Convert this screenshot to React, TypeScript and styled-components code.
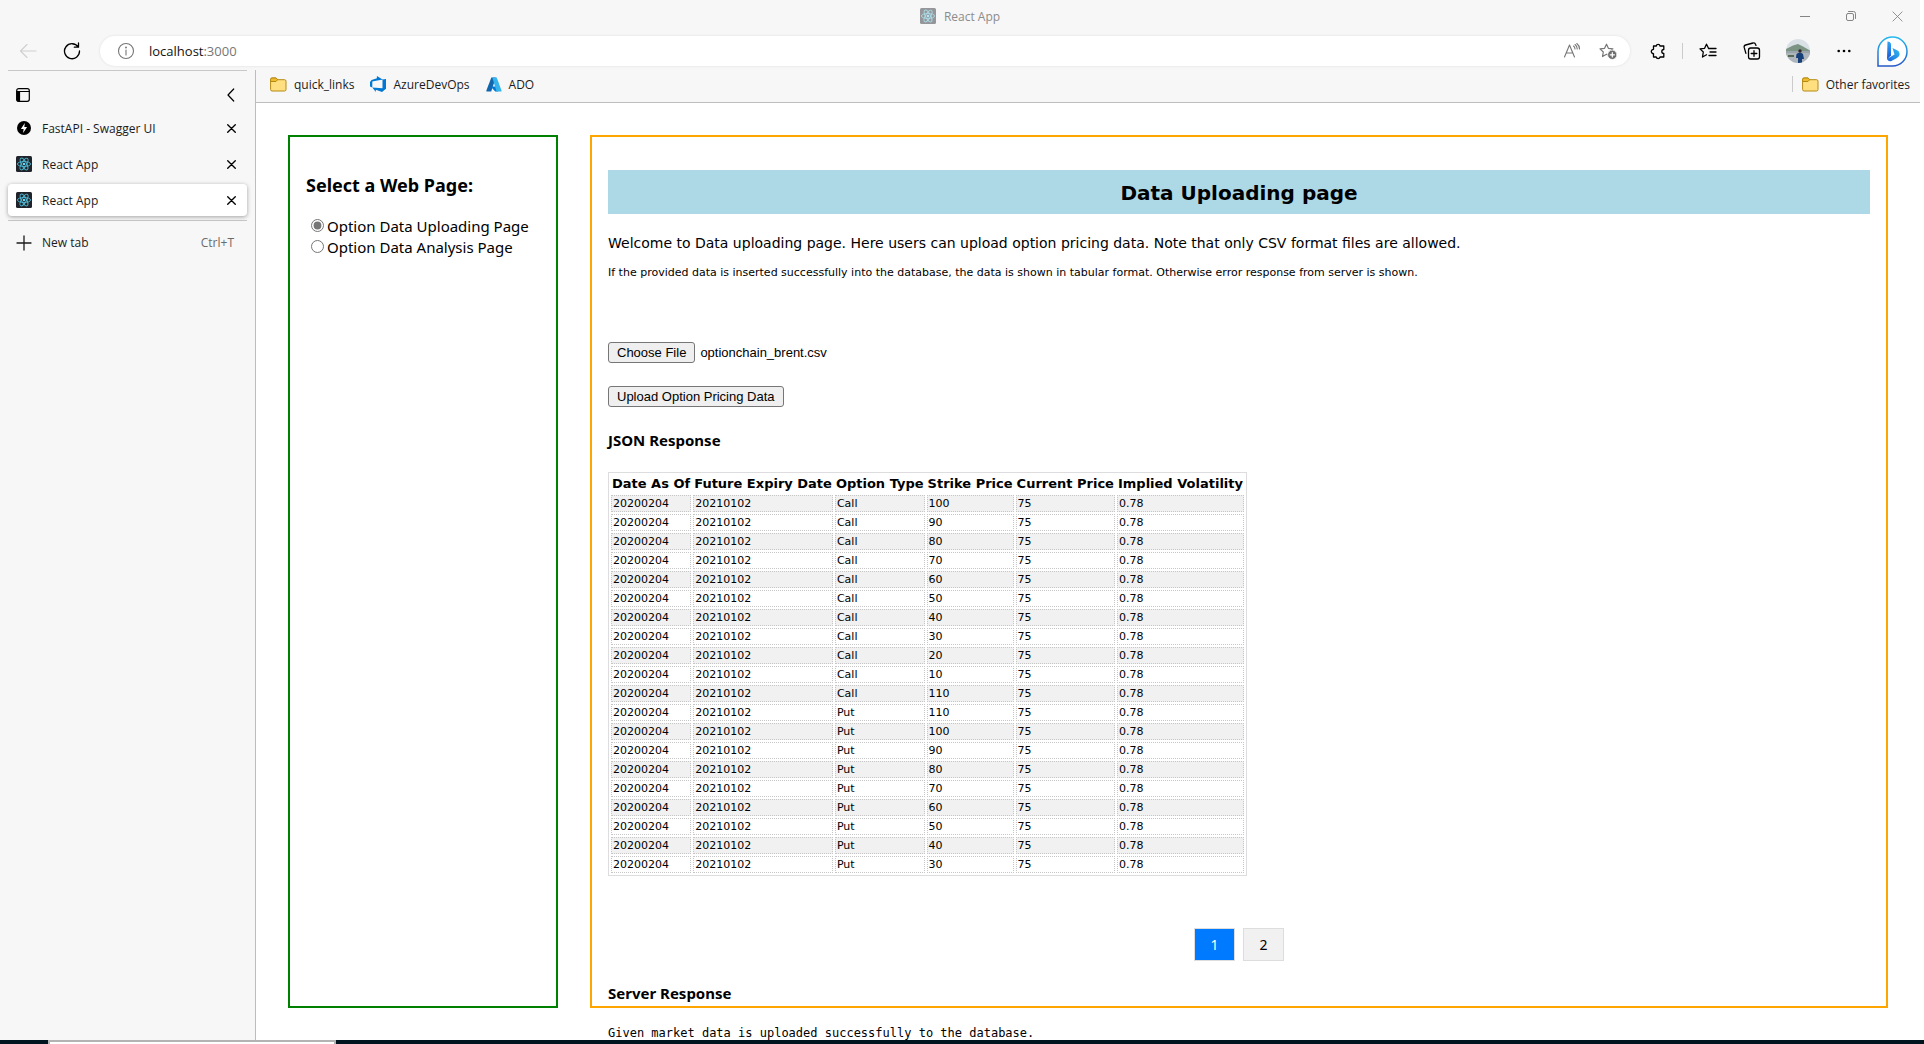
import React, { useState } from "react";
import styled, { createGlobalStyle, css } from "styled-components";

const uiFont = `"Open Sans", "Noto Sans", sans-serif`;
const headingFont = `"Noto Sans", "Open Sans", sans-serif`;
const pageFont = `"DejaVu Sans", sans-serif`;

const Global = createGlobalStyle`
  * { box-sizing: border-box; }
  body { margin: 0; background: #fff; color: #000; }
`;

const Desktop = styled.div`
  display: flex;
  flex-direction: column;
  height: 100vh;
  overflow: hidden;
  background: #fff;
`;

const BrowserWindow = styled.div`
  flex: 1;
  min-height: 0;
  display: flex;
  flex-direction: column;
  margin-right: 4px;
  background: #f7f7f7;
  font-family: ${uiFont};
  font-size: 12px;
`;

const TitleBar = styled.header`
  display: grid;
  grid-template-columns: 1fr auto 1fr;
  align-items: center;
  height: 32px;
`;

const WindowTitle = styled.div`
  display: flex;
  align-items: center;
  gap: 8px;
  color: #8c8c8c;
  svg { opacity: 0.45; }
`;

const WindowButtons = styled.div`
  display: flex;
  justify-content: flex-end;
  color: #858585;
`;

const PlainButton = styled.button<{ $w?: number }>`
  display: flex;
  align-items: center;
  justify-content: center;
  flex: none;
  width: ${(p) => p.$w ?? 24}px;
  height: 32px;
  padding: 0;
  border: 0;
  background: none;
  color: inherit;
  &:disabled { color: #cfcfcf; }
`;

const Toolbar = styled.div`
  display: flex;
  align-items: center;
  height: 38px;
  padding: 0 2px 0 6px;
`;

const NavButtons = styled.div`
  display: flex;
  padding-right: 6px;
`;

const AddressBar = styled.form`
  flex: 1;
  display: flex;
  align-items: center;
  height: 30px;
  padding: 0 4px 0 17px;
  border-radius: 15px;
  background: #fff;
  box-shadow: 0 0 3px rgba(0, 0, 0, 0.1);
  color: #767676;
`;

const AddressField = styled.label`
  position: relative;
  flex: 1;
  margin-left: 14px;
  font-size: 13px;
  line-height: 20px;
`;

const AddressInput = styled.input`
  width: 100%;
  padding: 0;
  border: 0;
  outline: 0;
  background: none;
  color: #767676;
  font: inherit;
`;

const AddressHost = styled.span`
  position: absolute;
  left: 0;
  top: 0;
  background: #fff;
  color: #111;
  pointer-events: none;
`;

const ToolIcons = styled.div`
  display: flex;
  align-items: center;
`;

const Divider = styled.span<{ $m: string }>`
  width: 1px;
  height: 16px;
  margin: ${(p) => p.$m};
  background: #cbcbcb;
`;

const Body = styled.div`
  flex: 1;
  min-height: 0;
  display: grid;
  grid-template-columns: 256px minmax(0, 1fr);
`;

const Sidebar = styled.nav`
  padding: 0 8px;
  border-right: 1px solid #bdbdbd;
`;

const SidebarHead = styled.div`
  display: flex;
  align-items: center;
  justify-content: space-between;
  height: 42px;
  padding: 6px 4px 0 6px;
  border-top: 1px solid #c8c8c8;
`;

const TabList = styled.ul`
  margin: 0;
  padding: 0 0 4px;
  list-style: none;
  border-bottom: 1px solid #c8c8c8;
`;

const Tab = styled.li<{ $active?: boolean }>`
  display: flex;
  align-items: center;
  height: 32px;
  margin-bottom: 4px;
  padding: 0 4px 0 8px;
  border-radius: 4px;
  &:last-child { margin-bottom: 0; }
  ${(p) => p.$active && css`
    background: #fff;
    box-shadow: 0 1px 4px rgba(0, 0, 0, 0.35);
  `}
`;

const TabTitle = styled.a`
  flex: 1;
  display: flex;
  align-items: center;
  gap: 10px;
  color: #1b1b1b;
  text-decoration: none;
`;

const NewTab = styled.button`
  display: flex;
  align-items: center;
  width: 100%;
  height: 43px;
  padding: 0 13px 0 8px;
  border: 0;
  background: none;
  color: #1b1b1b;
  font: inherit;
`;

const NewTabLabel = styled.span`
  flex: 1;
  margin-left: 10px;
  text-align: left;
`;

const Shortcut = styled.span`
  color: #6b6b6b;
`;

const ContentColumn = styled.div`
  display: flex;
  flex-direction: column;
  min-width: 0;
  min-height: 0;
`;

const FavoritesBar = styled.div`
  display: flex;
  align-items: center;
  gap: 16px;
  height: 33px;
  padding: 0 10px 4px 14px;
  border-bottom: 1px solid #bdbdbd;
`;

const Favorite = styled.a`
  display: flex;
  align-items: center;
  gap: 7px;
  color: #1b1b1b;
  text-decoration: none;
`;

const OtherFavorites = styled.div`
  display: flex;
  align-items: center;
  margin-left: auto;
`;

const Page = styled.main`
  flex: 1;
  min-height: 0;
  display: grid;
  grid-template-columns: 270px minmax(0, 1fr);
  gap: 32px;
  padding: 32px;
  overflow: hidden;
  background: #fff;
  font-family: ${pageFont};
`;

const Panel = styled.section<{ $color: string }>`
  min-height: 0;
  padding: 0 16px;
  border: 2px solid ${(p) => p.$color};
`;

const PickerTitle = styled.h3`
  margin: 35px 0 18px;
  font: bold 18px/26px ${headingFont};
`;

const PickerOption = styled.label`
  display: flex;
  align-items: center;
  height: 21px;
  font: 15px/21px ${headingFont};
  white-space: nowrap;
`;

const Radio = styled.input`
  width: 13px;
  height: 13px;
  margin: 0 3px 3px 5px;
  accent-color: #767676;
`;

const Banner = styled.h2`
  margin: 33px 0 16px;
  padding: 9px 8px 7px;
  background: lightblue;
  font-size: 20px;
  line-height: 28px;
  text-align: center;
`;

const Lead = styled.p`
  margin: 0 0 8px;
  font-size: 14px;
  line-height: 26px;
`;

const Note = styled.p`
  margin: 0 0 60px;
  font-size: 11px;
  line-height: 18px;
`;

const FileRow = styled.div`
  display: flex;
  align-items: center;
  gap: 5px;
  margin-bottom: 23px;
  font: 13px/21px "Liberation Sans", Arial, sans-serif;
`;

const HiddenFile = styled.input`
  display: none;
`;

const FormButton = styled.button`
  height: 21px;
  padding: 0 8px;
  border: 1px solid #767676;
  border-radius: 3px;
  background: #efefef;
  color: #000;
  font: 13px/18px "Liberation Sans", Arial, sans-serif;
`;

const SectionTitle = styled.h4`
  margin: 0;
  font: bold 15px/20px ${headingFont};
`;

const DataTable = styled.table`
  margin: 22px 0 52px;
  border: 1px solid #dddde0;
  border-collapse: separate;
  border-spacing: 2px;
`;

const HeadCell = styled.th`
  padding: 1px;
  font-size: 13px;
  line-height: 16px;
  text-align: left;
  white-space: nowrap;
`;

const Row = styled.tr`
  &:nth-child(odd) { background: #f1f1f1; }
`;

const Cell = styled.td`
  padding: 1px;
  border: 1px dotted #c6c6c6;
  font-size: 11px;
  line-height: 13px;
`;

const Pager = styled.div`
  display: flex;
  justify-content: center;
  gap: 8px;
  margin-bottom: 22px;
`;

const PageButton = styled.button<{ $active: boolean }>`
  width: 41px;
  height: 33px;
  padding: 0;
  border: 1px solid #ddd;
  background: ${(p) => (p.$active ? "#007bff" : "#f1f1f1")};
  color: ${(p) => (p.$active ? "#fff" : "#000")};
  font: 14px/20px ${headingFont};
`;

const ServerText = styled.pre`
  margin: 20px 0 0;
  font: 12px/20px "DejaVu Sans Mono", monospace;
`;

const Taskbar = styled.footer`
  display: flex;
  height: 4px;
  padding-left: 48px;
  background: #00141f;
`;

const TaskPreview = styled.div`
  width: 288px;
  border: solid #b3b3b3;
  border-width: 2px 2px 0;
  background: #fff;
`;

const line = { fill: "none", stroke: "currentColor", strokeLinecap: "round", strokeLinejoin: "round" } as const;

const ReactIcon = () => (
  <svg width="16" height="16" viewBox="0 0 16 16">
    <rect width="16" height="16" rx="1.500" fill="#20232a" />
    <g fill="none" stroke="#4fb8d3" strokeWidth="0.9">
      {[0, 60, 120].map((a) => (
        <ellipse key={a} cx="8" cy="8" rx="6.6" ry="2.5" transform={`rotate(${a} 8 8)`} />
      ))}
    </g>
    <circle cx="8" cy="8" r="1.3" fill="#61dafb" />
  </svg>
);

const FastApiIcon = () => (
  <svg width="16" height="16" viewBox="0 0 16 16">
    <circle cx="8" cy="8" r="7" fill="#000" />
    <path d="M8.8 3 4.9 8.9h2.7L7.1 13l4-6H8.3z" fill="#fff" />
  </svg>
);

const BackIcon = () => (
  <svg width="18" height="16" viewBox="0 0 18 16" {...line} strokeWidth="1.1"><path d="M17 8H1.5M8 1.5 1.5 8 8 14.5" /></svg>
);
const ReloadIcon = () => (
  <svg width="18" height="18" viewBox="0 0 18 18" {...line} strokeWidth="1.3">
    <path d="M15.2 5A7.500 7.500 0 1 0 16.500 9M15.500 1v4.200h-4.200" />
  </svg>
);
const InfoIcon = () => (
  <svg width="18" height="18" viewBox="0 0 18 18" {...line} strokeWidth="1.1">
    <circle cx="9" cy="9" r="7.5" /><path d="M9 8v5" /><circle cx="9" cy="5.5" r="0.4" fill="currentColor" />
  </svg>
);
const SidePaneIcon = () => (
  <svg width="14" height="14" viewBox="0 0 14 14" {...line} strokeWidth="1.2">
    <rect x="0.7" y="0.7" width="12.6" height="12.6" rx="2" />
    <path d="M1 3.500h12.200" /><path d="M1 3.500h2.500v9.500H2a1 1 0 0 1-1-1z" fill="currentColor" />
  </svg>
);
const ChevronIcon = () => (
  <svg width="8" height="14" viewBox="0 0 8 14" {...line} strokeWidth="1.2"><path d="M6.7 1 1 7l5.7 6" /></svg>
);
const CloseIcon = ({ size = 9, w = 1.5 }) => (
  <svg width={size} height={size} viewBox="0 0 10 10" {...line} strokeWidth={w}><path d="m.8.8 8.4 8.4M9.2.8.8 9.2" /></svg>
);
const PlusIcon = () => (
  <svg width="16" height="16" viewBox="0 0 16 16" {...line} strokeWidth="1.3"><path d="M8 1v14M1 8h14" /></svg>
);
const MinimizeIcon = () => (
  <svg width="10" height="10" viewBox="0 0 10 10" {...line}><path d="M0 5.5h10" /></svg>
);
const RestoreIcon = () => (
  <svg width="12" height="12" viewBox="0 0 12 12" {...line}>
    <rect x="1.5" y="3.5" width="7" height="7" rx="1.5" /><path d="M3.5 1.5h5a2 2 0 0 1 2 2v5" />
  </svg>
);
const FolderIcon = () => (
  <svg width="17" height="15" viewBox="0 0 17 15" stroke="#b58a12" strokeLinejoin="round">
    <path d="M.6 2.5A1.5 1.5 0 0 1 2.1 1h4l1.600 1.700h6.800A1.5 1.5 0 0 1 16 4.200v8.300a1.5 1.5 0 0 1-1.5 1.5H2.100A1.5 1.5 0 0 1 .6 12.500z" fill="#ffdf80" />
    <path d="M.6 4.500V2.500A1.5 1.5 0 0 1 2.100 1h4l1.600 1.700-1.700 1.800z" fill="#eebb30" />
  </svg>
);
const DevOpsIcon = () => (
  <svg width="16" height="16" viewBox="0 0 16 16" fill="#0078d4">
    <path d="M16 3v9.700L12 16l-6.200-2.300V16L2.300 11.400l10.200.8V3.400zM12.600 3.500 6.900 0v2.300L1.600 3.900 0 5.900v4.700l2.300 1V5.500z" />
  </svg>
);
const AzureIcon = () => (
  <svg width="16" height="15" viewBox="0 0 16 15">
    <path d="M5.300.5h4.500L5.200 14.500H.8a.6.6 0 0 1-.5-.8z" fill="#1266ad" />
    <path d="M11.500 9.500H4.600l4.600 5h3z" fill="#0078d4" />
    <path d="M6.300.5h4.400l4.900 13.200a.6.6 0 0 1-.5.8h-4.600z" fill="#35b4ee" />
  </svg>
);
const star = "M7.5 1.200 9.400 5.300l4.500.6-3.300 3.100.8 4.500-3.900-2.200-4 2.200.8-4.500L1 5.900l4.600-.6z";
const ReadAloudIcon = () => (
  <svg width="18" height="16" viewBox="0 0 18 16" {...line} strokeWidth="1.1">
    <path d="M1.500 14 6.500 2l5 12M3.200 10h6.600M10.500 3q1.500 1 1.500 3M12 1.500q2.300 1.800 2.200 4.500M13.800.5q2.700 2 2.700 5.500" />
  </svg>
);
const AddFavoriteIcon = () => (
  <svg width="19" height="17" viewBox="0 0 19 17" {...line} strokeWidth="1.2">
    <path d={star} /><circle cx="13.300" cy="11.800" r="4.700" fill="#6d6d6d" stroke="#fff" strokeWidth="0.8" />
    <path d="M13.300 9.700v4.200M11.200 11.800h4.200" stroke="#fff" />
  </svg>
);
const PuzzleIcon = () => (
  <svg width="17" height="17" viewBox="0 0 17 17" {...line} strokeWidth="1.3">
    <path d="M3.500 3h2.700a2 2 0 0 1 3.900 0h3.700v3.500a2 2 0 0 0 0 4V14h-3.700a2 2 0 0 1-3.900 0H3.500v-3.300a2.200 2.200 0 0 1 0-4.400z" />
  </svg>
);
const FavoritesIcon = () => (
  <svg width="18" height="16" viewBox="0 0 18 16" {...line} strokeWidth="1.3">
    <path d="M9.500 5.300 7.500 1.200 5.600 5.300 1 5.900 4.300 9l-.8 5 4-2.200M9.500 5.500H17M11 9h6M10 12.500h7" />
  </svg>
);
const CollectionsIcon = () => (
  <svg width="18" height="18" viewBox="0 0 18 18" {...line} strokeWidth="1.3">
    <rect x="5.500" y="6" width="11" height="11" rx="2.200" />
    <path d="M11 8.700v5.600M8.200 11.500h5.600M13 3.400 12.500 2.200A2 2 0 0 0 10 1L2.600 3A2 2 0 0 0 1.200 5.400l1.700 6" />
  </svg>
);
const Avatar = () => (
  <svg width="24" height="24" viewBox="0 0 24 24">
    <defs><clipPath id="face"><circle cx="12" cy="12" r="12" /></clipPath></defs>
    <g clipPath="url(#face)">
      <rect width="24" height="24" fill="#d9e0e6" />
      <path d="M0 10 7 6.500 12 5l5 2.500 7 4v6H0z" fill="#7b9484" />
      <path d="M0 12h24v3H0z" fill="#99a5a8" /><path d="M0 14h24v10H0z" fill="#aeb5bc" />
      <path d="M2 16h6v2H2z" fill="#566b52" />
      <circle cx="14" cy="12" r="1.700" fill="#35262a" />
      <path d="M10.500 15q3.500-2.500 6.500 0l1 5h-2v4h-4v-5h-2z" fill="#173f78" />
    </g>
  </svg>
);
const MoreIcon = () => (
  <svg width="14" height="4" viewBox="0 0 14 4" fill="currentColor"><circle cx="1.700" cy="2" r="1.300" /><circle cx="7" cy="2" r="1.300" /><circle cx="12.300" cy="2" r="1.300" /></svg>
);
const BingIcon = () => (
  <svg width="31" height="31" viewBox="0 0 31 31">
    <defs>
      <linearGradient id="ring" x1="0" y1="0" x2="0" y2="1"><stop offset="0" stopColor="#25b9ec" /><stop offset="1" stopColor="#2458c8" /></linearGradient>
      <linearGradient id="bee" x1="0" y1="1" x2="1" y2="0"><stop offset="0" stopColor="#1b63df" /><stop offset="1" stopColor="#2ebff0" /></linearGradient>
      <linearGradient id="stem" x1="0" y1="0" x2="0" y2="1"><stop offset="0" stopColor="#2ea6f2" /><stop offset="1" stopColor="#1b55d8" /></linearGradient>
    </defs>
    <path d="M15.500 1A14.500 14.500 0 1 1 15.500 30H1V15.500A14.500 14.500 0 0 1 15.500 1z" fill="#fff" stroke="url(#ring)" strokeWidth="1.500" />
    <path d="M10.500 5.500q3.500 0 3.500 3.500v10.500l-4 4z" fill="url(#stem)" />
    <path d="M15.500 12 20.500 14.500Q23 16 22.500 19 22 21 19.500 22.200L14 25.200Q11.500 26 10 23L17.500 18.500z" fill="url(#bee)" />
  </svg>
);

const tabs = [
  { title: "FastAPI - Swagger UI", icon: <FastApiIcon /> },
  { title: "React App", icon: <ReactIcon /> },
  { title: "React App", icon: <ReactIcon />, active: true },
];

const columns = ["Date As Of", "Future Expiry Date", "Option Type", "Strike Price", "Current Price", "Implied Volatility"];
const calls = [100, 90, 80, 70, 60, 50, 40, 30, 20, 10, 110];
const puts = [110, 100, 90, 80, 70, 60, 50, 40, 30];
const rows = [
  ...calls.map((s) => ["20200204", "20210102", "Call", s, 75, 0.78]),
  ...puts.map((s) => ["20200204", "20210102", "Put", s, 75, 0.78]),
];

export default function App() {
  const [choice, setChoice] = useState("upload");
  const [page, setPage] = useState(1);
  const fileRef = React.useRef<HTMLInputElement>(null);

  return (
    <Desktop>
      <Global />
      <BrowserWindow>
        <TitleBar>
          <span />
          <WindowTitle><ReactIcon />React App</WindowTitle>
          <WindowButtons>
            <PlainButton $w={46} aria-label="Minimize"><MinimizeIcon /></PlainButton>
            <PlainButton $w={46} aria-label="Restore"><RestoreIcon /></PlainButton>
            <PlainButton $w={46} aria-label="Close"><CloseIcon size={11} w={0.8} /></PlainButton>
          </WindowButtons>
        </TitleBar>

        <Toolbar>
          <NavButtons>
            <PlainButton $w={44} aria-label="Back" disabled><BackIcon /></PlainButton>
            <PlainButton $w={44} aria-label="Refresh"><ReloadIcon /></PlainButton>
          </NavButtons>
          <AddressBar onSubmit={(e) => e.preventDefault()}>
            <InfoIcon />
            <AddressField>
              <AddressInput aria-label="Address" defaultValue="localhost:3000" />
              <AddressHost aria-hidden>localhost</AddressHost>
            </AddressField>
            <PlainButton $w={36} type="button" aria-label="Read aloud"><ReadAloudIcon /></PlainButton>
            <PlainButton $w={36} type="button" aria-label="Add favorite"><AddFavoriteIcon /></PlainButton>
          </AddressBar>
          <ToolIcons>
            <PlainButton $w={56} aria-label="Extensions"><PuzzleIcon /></PlainButton>
            <Divider $m="0 3px 0 -4px" />
            <PlainButton $w={44} aria-label="Favorites"><FavoritesIcon /></PlainButton>
            <PlainButton $w={44} aria-label="Collections"><CollectionsIcon /></PlainButton>
            <PlainButton $w={48} aria-label="Profile"><Avatar /></PlainButton>
            <PlainButton $w={44} aria-label="More"><MoreIcon /></PlainButton>
            <PlainButton $w={52} aria-label="Bing"><BingIcon /></PlainButton>
          </ToolIcons>
        </Toolbar>

        <Body>
          <Sidebar>
            <SidebarHead>
              <PlainButton $w={18} aria-label="Tab actions"><SidePaneIcon /></PlainButton>
              <PlainButton $w={24} aria-label="Collapse pane"><ChevronIcon /></PlainButton>
            </SidebarHead>
            <TabList>
              {tabs.map((t, i) => (
                <Tab key={i} $active={t.active}>
                  <TabTitle href="#">{t.icon}{t.title}</TabTitle>
                  <PlainButton aria-label={`Close ${t.title}`}><CloseIcon /></PlainButton>
                </Tab>
              ))}
            </TabList>
            <NewTab><PlusIcon /><NewTabLabel>New tab</NewTabLabel><Shortcut>Ctrl+T</Shortcut></NewTab>
          </Sidebar>

          <ContentColumn>
            <FavoritesBar>
              <Favorite href="#"><FolderIcon />quick_links</Favorite>
              <Favorite href="#"><DevOpsIcon />AzureDevOps</Favorite>
              <Favorite href="#"><AzureIcon />ADO</Favorite>
              <OtherFavorites>
                <Divider $m="0 9px 0 0" />
                <Favorite href="#"><FolderIcon />Other favorites</Favorite>
              </OtherFavorites>
            </FavoritesBar>

            <Page>
              <Panel $color="green">
                <PickerTitle>Select a Web Page:</PickerTitle>
                <PickerOption>
                  <Radio type="radio" name="page" checked={choice === "upload"} onChange={() => setChoice("upload")} />
                  Option Data Uploading Page
                </PickerOption>
                <PickerOption>
                  <Radio type="radio" name="page" checked={choice === "analysis"} onChange={() => setChoice("analysis")} />
                  Option Data Analysis Page
                </PickerOption>
              </Panel>

              <Panel $color="orange">
                <Banner>Data Uploading page</Banner>
                <Lead>Welcome to Data uploading page. Here users can upload option pricing data. Note that only CSV format files are allowed.</Lead>
                <Note>If the provided data is inserted successfully into the database, the data is shown in tabular format. Otherwise error response from server is shown.</Note>
                <FileRow>
                  <HiddenFile ref={fileRef} type="file" accept=".csv" aria-label="Option pricing file" />
                  <FormButton onClick={() => fileRef.current?.click()}>Choose File</FormButton>
                  <span>optionchain_brent.csv</span>
                </FileRow>
                <FileRow><FormButton>Upload Option Pricing Data</FormButton></FileRow>
                <SectionTitle>JSON Response</SectionTitle>
                <DataTable>
                  <thead><tr>{columns.map((c) => <HeadCell key={c}>{c}</HeadCell>)}</tr></thead>
                  <tbody>
                    {rows.map((r, i) => <Row key={i}>{r.map((v, j) => <Cell key={j}>{v}</Cell>)}</Row>)}
                  </tbody>
                </DataTable>
                <Pager>
                  {[1, 2].map((n) => (
                    <PageButton key={n} $active={page === n} onClick={() => setPage(n)}>{n}</PageButton>
                  ))}
                </Pager>
                <SectionTitle>Server Response</SectionTitle>
                <ServerText>Given market data is uploaded successfully to the database.</ServerText>
              </Panel>
            </Page>
          </ContentColumn>
        </Body>
      </BrowserWindow>
      <Taskbar><TaskPreview /></Taskbar>
    </Desktop>
  );
}
